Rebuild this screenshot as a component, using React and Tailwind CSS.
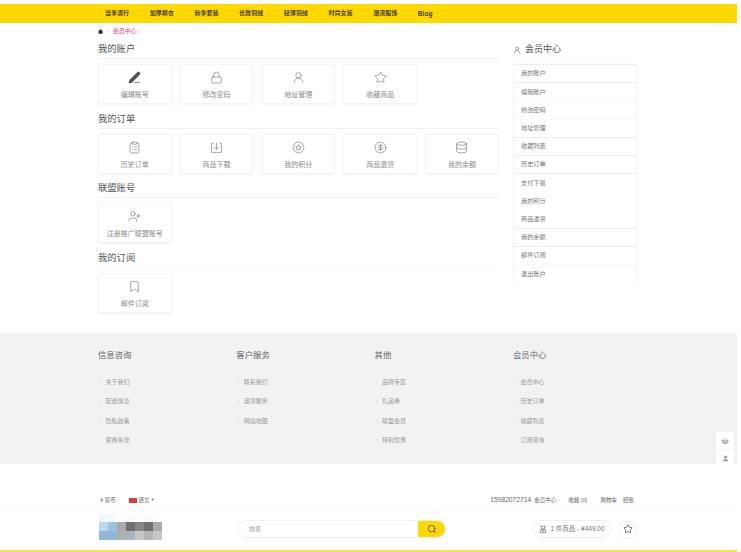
import {
  Bookmark,
  ChevronDown,
  ChevronRight,
  CircleDollarSign,
  ClipboardList,
  Database,
  Home,
  Lock,
  PenLine,
  Search,
  ShoppingBasket,
  Star,
  User,
  UserPlus,
  UserRound,
} from "lucide-react";

const navItems = [
  { name: "当季流行", caret: true },
  { name: "加厚棉衣", caret: true },
  { name: "秋季套装" },
  { name: "长款羽绒", caret: true },
  { name: "轻薄羽绒" },
  { name: "时尚女装" },
  { name: "潮流服饰", caret: true },
  { name: "Blog", caret: true },
];

const DownloadBox = (props) => (
  <svg viewBox="0 0 24 24" fill="none" stroke="currentColor" strokeWidth="1.2" {...props}>
    <path d="M7 4H3v17h18V4h-4" />
    <path d="M12 3v12M7.5 11l4.5 4.5 4.5-4.5" />
  </svg>
);

const CircleStar = (props) => (
  <svg viewBox="0 0 24 24" fill="none" stroke="currentColor" strokeWidth="1.2" {...props}>
    <circle cx="12" cy="12" r="10" />
    <path d="M12 6.8l1.6 3.4 3.7.5-2.7 2.5.7 3.6-3.3-1.8-3.3 1.8.7-3.6-2.7-2.5 3.7-.5z" />
  </svg>
);

const CartBag = (props) => (
  <svg viewBox="0 0 24 24" fill="none" stroke="currentColor" strokeWidth="1.8" {...props}>
    <path d="M4 2.5h16M6.5 2.5l2 8M17.5 2.5l-2 8M7 10.5h10" />
    <path d="M4 13h16v8.5H4zM9 17h6" />
  </svg>
);

const sections = [
  {
    title: "我的账户",
    cards: [
      { label: "编辑账号", Icon: PenLine, dark: true },
      { label: "修改密码", Icon: Lock },
      { label: "地址管理", Icon: UserRound },
      { label: "收藏商品", Icon: Star },
    ],
  },
  {
    title: "我的订单",
    cards: [
      { label: "历史订单", Icon: ClipboardList },
      { label: "商品下载", Icon: DownloadBox },
      { label: "我的积分", Icon: CircleStar },
      { label: "商品退货", Icon: CircleDollarSign },
      { label: "我的余额", Icon: Database },
    ],
  },
  {
    title: "联盟账号",
    cards: [{ label: "注册推广联盟账号", Icon: UserPlus }],
  },
  {
    title: "我的订阅",
    faint: true,
    cards: [{ label: "邮件订阅", Icon: Bookmark }],
  },
];

const sideLinks = [
  { name: "我的账户", line: "border-[#ececec]" },
  { name: "编辑账户", line: "border-[#f8f8f8]" },
  { name: "修改密码", line: "border-[#f8f8f8]" },
  { name: "地址管理", line: "border-[#ececec]" },
  { name: "收藏列表", line: "border-[#ececec]" },
  { name: "历史订单", line: "border-[#ececec]" },
  { name: "支付下载", line: "border-transparent" },
  { name: "我的积分", line: "border-transparent" },
  { name: "商品退货", line: "border-[#ececec]" },
  { name: "我的余额", line: "border-[#ececec]" },
  { name: "邮件订阅", line: "border-[#f8f8f8]" },
  { name: "退出账户", line: "border-transparent" },
];

const footerCols = [
  { title: "信息咨询", links: ["关于我们", "配送信息", "隐私政策", "使用条款"] },
  { title: "客户服务", links: ["联系我们", "退货服务", "网站地图"] },
  { title: "其他", links: ["品牌专区", "礼品券", "联盟会员", "特别优惠"] },
  { title: "会员中心", links: ["会员中心", "历史订单", "收藏列表", "订阅咨询"] },
];

const logoCells = [
  "#f1f8fd", "#f6fafe", "#fdfdfd", "#fbfbfb", "#fdfdfd", "#fafafa", "#fdfdfd",
  "#bcd9ee", "#9cc3e0", "#aaaaaa", "#707070", "#858585", "#707070", "#aaaaaa",
  "#93b5d8", "#93b5d8", "#b0b0b0", "#a5b5c5", "#c6c6c6", "#b5b5b5", "#c8c8c8",
];

function Card({ label, Icon, dark }) {
  return (
    <div className="w-[73.5px] h-[40px] rounded-[2px] border border-[#f4f4f4] shadow-[0_1px_2px_rgba(0,0,0,0.05)] flex flex-col items-center pt-[6px] bg-white">
      <Icon
        className={`w-[13px] h-[13px] ${dark ? "text-[#333] fill-[#555]" : "text-[#777]"}`}
        strokeWidth={1.2}
      />
      <span className="mt-[6px] text-[7px] leading-[10px] text-[#8a8a8a] whitespace-nowrap">
        {label}
      </span>
    </div>
  );
}

function Section({ title, cards, faint }) {
  return (
    <div>
      <h2
        className={`h-[19px] pt-[2px] flex items-center text-[9.3px] text-[#555] border-b ${
          faint ? "border-[#fafafa]" : "border-[#f0f0f0]"
        }`}
      >
        {title}
      </h2>
      <div className="mt-[5px] flex gap-[8.3px]">
        {cards.map((card) => (
          <Card key={card.label} {...card} />
        ))}
      </div>
    </div>
  );
}

export default function App() {
  return (
    <div className="relative w-[741px] h-[552px] overflow-hidden bg-white font-['Liberation_Sans','Noto_Sans_CJK_SC',sans-serif]">
      <div className="w-[737px] pt-[4px]">
        <nav className="h-[19px] bg-[#ffd800] flex items-center pl-[105px]">
          {navItems.map((item) => (
            <div
              key={item.name}
              className="w-[44.7px] flex items-center gap-[3px] text-[6px] font-bold text-[#444]"
            >
              <span className={item.name === "Blog" ? "text-[6.6px]" : ""}>{item.name}</span>
              {item.caret && <ChevronDown className="w-[4px] h-[4px] text-[#888]" />}
            </div>
          ))}
        </nav>

        <main className="flex gap-[14px] pl-[98px] pb-[20px]">
          <div className="w-[401px]">
            <div className="h-[17px] flex items-center gap-[4px] text-[6px]">
              <Home className="w-[5px] h-[5px] text-[#333] fill-[#333]" />
              <span className="text-[#ccc]">/</span>
              <span className="text-[#f0386b]">会员中心</span>
            </div>
            <div className="flex flex-col gap-[5.7px]">
              {sections.map((section) => (
                <Section key={section.title} {...section} />
              ))}
            </div>
          </div>

          <aside className="w-[124px] pt-[17px]">
            <h2 className="h-[19px] pt-[2px] flex items-center gap-[4px] text-[9px] text-[#555] border-b border-[#fafafa]">
              <UserRound className="w-[8px] h-[8px] text-[#555]" strokeWidth={1.4} />
              会员中心
            </h2>
            <ul className="mt-[5px] border-x border-t border-x-[#f4f4f4] border-t-[#ececec]">
              {sideLinks.map((link) => (
                <li
                  key={link.name}
                  className={`h-[18.2px] pb-[1px] flex items-center pl-[7px] text-[6.2px] text-[#777] border-b ${link.line}`}
                >
                  {link.name}
                </li>
              ))}
            </ul>
          </aside>
        </main>

        <footer className="h-[131px] bg-[#f1f2f4] flex pl-[98px] pt-[14px]">
          {footerCols.map((col) => (
            <div key={col.title} className="w-[138.3px]">
              <h3 className="w-[100px] h-[20px] pb-[2px] flex items-center text-[8.4px] text-[#666] border-b border-[#ebecef]">
                {col.title}
              </h3>
              <ul className="mt-[5px]">
                {col.links.map((link) => (
                  <li
                    key={link}
                    className="h-[19.4px] pt-[1px] flex items-center gap-[3px] pl-[0.5px] text-[6px] text-[#999]"
                  >
                    <ChevronRight className="w-[4px] h-[4px] text-[#aaa]" />
                    <span>{link}</span>
                  </li>
                ))}
              </ul>
            </div>
          ))}
        </footer>

        <div className="h-[46px] flex items-end justify-between pl-[100px] pr-[103px] pb-[4px] border-b border-[#f9f9f9] text-[5.5px] leading-[10px] text-[#666]">
          <div className="flex items-center">
            <span>¥ 货币</span>
            <ChevronDown className="w-[4px] h-[4px] ml-[1px] text-[#999]" />
            <span className="ml-[8px] w-[8px] h-[5px] bg-[#de3b3b]" />
            <span className="ml-[2px]">语言</span>
            <span className="ml-[1px] text-[4px]">▼</span>
          </div>
          <div className="flex items-center">
            <span className="text-[6.7px]">15982072714</span>
            <span className="ml-[3px]">会员中心</span>
            <ChevronDown className="w-[4px] h-[4px] ml-[1px] text-[#999]" />
            <span className="ml-[7px]">收藏 (0)</span>
            <span className="ml-[13px]">购物车</span>
            <span className="ml-[6px]">结账</span>
          </div>
        </div>

        <div className="h-[42px] flex items-center pl-[99px] pr-[100px] pb-[2px] border-b-2 border-[#ffe544]">
          <div className="w-[63px] h-[26px] -mt-[4px] grid grid-cols-7 grid-rows-[8px_9px_9px]">
            {logoCells.map((color, i) => (
              <div key={i} style={{ backgroundColor: color }} />
            ))}
          </div>
          <div className="ml-[75px] w-[209px] h-[18px] rounded-full border border-[#f0f0f0] flex items-center overflow-hidden">
            <span className="flex-1 pl-[11px] text-[6px] text-[#999]">搜索</span>
            <span className="w-[27px] h-full bg-[#ffd800] flex items-center justify-center">
              <Search className="w-[10px] h-[10px] text-[#333]" strokeWidth={1.6} />
            </span>
          </div>
          <div className="ml-[86px] w-[80px] h-[18px] rounded-full border border-[#f0f0f0] flex items-center justify-center gap-[3px] text-[6.5px] text-[#777]">
            <CartBag className="w-[8px] h-[9px] text-[#555]" />
            1 件商品 - ¥449.00
          </div>
          <div className="ml-[6px] w-[19px] h-[19px] rounded-full border border-[#f0f0f0] flex items-center justify-center">
            <Star className="w-[10px] h-[10px] text-[#333]" strokeWidth={1.6} />
          </div>
        </div>
      </div>

      {/* floating cart / account widget */}
      <div className="absolute left-[716px] top-[432px] w-[18px] h-[42px] rounded-[2px] bg-white flex flex-col items-center">
        <div className="h-[18px] w-full flex items-center justify-center border-b border-[#f4f4f4]">
          <ShoppingBasket className="w-[8px] h-[8px] text-[#888]" strokeWidth={1.6} />
        </div>
        <div className="h-[17px] flex items-center justify-center">
          <User className="w-[7px] h-[7px] text-[#888] fill-[#999]" strokeWidth={1.6} />
        </div>
      </div>
    </div>
  );
}
